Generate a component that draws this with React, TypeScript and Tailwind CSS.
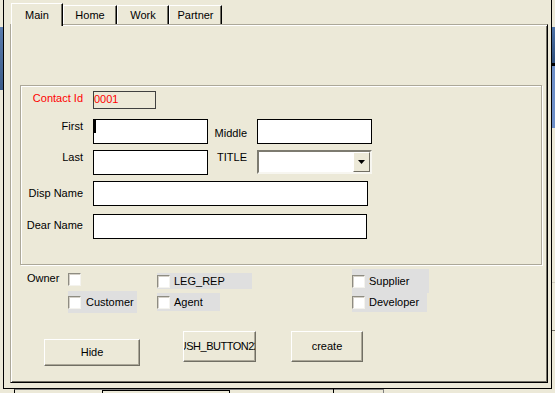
import React from "react";

function Check() {
  return (
    <span className="block w-[13px] h-[13px] shrink-0 bg-white border border-t-[#8e8c82] border-l-[#8e8c82] border-r-[#f4f3ee] border-b-[#f4f3ee] shadow-[inset_1px_1px_0_#d4d0c8]" />
  );
}

function Opt({ label, cls, gap }: { label: string; cls: string; gap: string }) {
  return (
    <div className={"flex items-center bg-[#dfdfdf] " + cls}>
      <Check />
      <span className={"whitespace-nowrap " + gap}>{label}</span>
    </div>
  );
}

function Btn({ children, cls, inner }: { children: React.ReactNode; cls: string; inner?: string }) {
  return (
    <div
      className={
        "flex items-center overflow-hidden whitespace-nowrap bg-[#ece9d8] border border-t-white border-l-white border-r-[#716f64] border-b-[#716f64] shadow-[inset_-1px_-1px_0_#aca899] " +
        cls
      }
    >
      <span className={"shrink-0 " + (inner ?? "")}>{children}</span>
    </div>
  );
}

function Tab({ label, selected, cls }: { label: string; selected?: boolean; cls: string }) {
  return (
    <div
      className={
        "flex justify-center bg-[#ece9d8] border-t border-l border-r border-t-white border-l-white border-r-black shadow-[inset_-1px_0_0_#716f64] " +
        (selected ? "relative z-10 h-[23px] -mb-[2px] pt-[5px] " : "h-[19px] pt-[3px] ") +
        cls
      }
    >
      {label}
    </div>
  );
}

export default function App() {
  return (
    <div className="relative w-[555px] h-[393px] overflow-hidden bg-[#ece9d8] font-['Liberation_Sans',Arial,sans-serif] text-[11px] leading-[13px] text-black">
      {/* background windows peeking out */}
      <div className="absolute left-0 top-[27px] w-[3px] h-[63px] bg-gradient-to-b from-[#5a7cae] to-[#3b5b8a]" />
      <div className="absolute right-0 top-[27px] w-[3px] h-[101px] flex flex-col">
        <div className="h-[36px] bg-gradient-to-b from-[#4f74a8] to-[#2f4f7c]" />
        <div className="h-[3px] bg-black" />
        <div className="flex-1 bg-[#6d8fc8]" />
      </div>
      <div className="absolute right-0 top-[282px] w-[3px] h-[49px] border-t border-b border-t-[#d0cdc0] border-b-[#716f64]" />
      <div className="absolute left-[14px] top-[389px] w-[370px] h-[4px] border-t border-l border-r border-t-[#808080] border-l-black border-r-[#808080]" />
      <div className="absolute left-[102px] top-[390px] w-[128px] h-[4px] border-t border-l border-r border-black" />
      <div className="absolute left-[333px] top-[389px] w-px h-[4px] bg-black" />

      {/* window frame */}
      <div className="ml-[3px] w-[549px] h-[389px] border-l border-r border-b border-black pl-[6px] flex flex-col">
        {/* tabs */}
        <div className="flex items-end h-[24px] pl-[1px]">
          <Tab label="Main" selected cls="w-[52px]" />
          <Tab label="Home" cls="w-[54px]" />
          <Tab label="Work" cls="w-[52px]" />
          <Tab label="Partner" cls="w-[53px]" />
        </div>

        {/* tab panel */}
        <div className="w-[538px] h-[359px] border border-t-[#aca899] border-l-[#aca899] border-r-black border-b-black shadow-[inset_1px_1px_0_#fff,inset_-1px_-1px_0_#716f64] flex flex-col">
          {/* group box */}
          <div className="ml-[9px] mt-[60px] w-[522px] h-[180px] border border-[#aca899] shadow-[inset_1px_1px_0_#fff,1px_1px_0_#fff] flex flex-col">
            {/* Contact Id */}
            <div className="mt-[5px] flex items-start">
              <div className="w-[62px] pt-[1px] text-right text-[#ff0000]">Contact Id</div>
              <div className="ml-[10px] w-[63px] h-[18px] border border-[#404040] text-[#ff0000] leading-[14px]">0001</div>
            </div>
            {/* First / Middle */}
            <div className="mt-[10px] flex items-start">
              <div className="w-[62px] pt-[1px] text-right">First</div>
              <div className="relative ml-[10px] w-[115px] h-[25px] bg-white border border-black">
                <div className="absolute left-0 top-0 w-[2px] h-[13px] bg-black" />
              </div>
              <div className="w-[39px] pt-[8px] text-right">Middle</div>
              <div className="ml-[10px] w-[115px] h-[25px] bg-white border border-black" />
            </div>
            {/* Last / TITLE */}
            <div className="mt-[6px] flex items-start">
              <div className="w-[62px] pt-[1px] text-right">Last</div>
              <div className="ml-[10px] w-[115px] h-[25px] bg-white border border-black" />
              <div className="w-[39px] pt-[1px] text-right">TITLE</div>
              <div className="ml-[10px] w-[115px] h-[24px] flex justify-end bg-white border-2 border-t-[#7d7b70] border-l-[#7d7b70] border-r-[#f7f6f0] border-b-[#f7f6f0]">
                <div className="w-[17px] h-full flex items-center justify-center bg-[#ece9d8] border border-t-white border-l-white border-r-[#716f64] border-b-[#716f64]">
                  <svg width="7" height="4" viewBox="0 0 7 4">
                    <polygon points="0,0 7,0 3.5,4" fill="#000" />
                  </svg>
                </div>
              </div>
            </div>
            {/* Disp Name */}
            <div className="mt-[6px] flex items-start">
              <div className="w-[62px] pt-[6px] text-right whitespace-nowrap">Disp Name</div>
              <div className="ml-[10px] w-[275px] h-[25px] bg-white border border-black" />
            </div>
            {/* Dear Name */}
            <div className="mt-[8px] flex items-start">
              <div className="w-[62px] pt-[5px] text-right whitespace-nowrap">Dear Name</div>
              <div className="ml-[10px] w-[274px] h-[25px] bg-white border border-black" />
            </div>
          </div>

          {/* check boxes */}
          <div className="flex items-start">
            <div className="ml-[16px] w-[41px] pt-[7px]">Owner</div>
            <div className="w-[89px] pt-[8px] flex flex-col items-start">
              <Check />
              <Opt label="Customer" cls="mt-[5px] w-[69px] h-[22px]" gap="ml-[5px]" />
            </div>
            <div className="w-[195px] pt-[8px] flex flex-col items-start">
              <Opt label="LEG_REP" cls="w-[95px] h-[16px]" gap="ml-[4px]" />
              <Opt label="Agent" cls="mt-[4px] w-[63px] h-[18px]" gap="ml-[4px]" />
            </div>
            <div className="pt-[4px] flex flex-col items-start">
              <Opt label="Supplier" cls="w-[77px] h-[24px]" gap="ml-[4px]" />
              <Opt label="Developer" cls="w-[75px] h-[19px]" gap="ml-[4px]" />
            </div>
          </div>

          {/* buttons */}
          <div className="mt-[18px] flex items-start">
            <Btn cls="justify-center ml-[33px] mt-[8px] w-[96px] h-[27px]">Hide</Btn>
            <Btn cls="justify-start ml-[43px] w-[73px] h-[31px]" inner="-ml-[12px] tracking-[-0.5px]">PUSH_BUTTON22</Btn>
            <Btn cls="justify-center ml-[35px] w-[72px] h-[31px]">create</Btn>
          </div>
        </div>
      </div>
    </div>
  );
}
